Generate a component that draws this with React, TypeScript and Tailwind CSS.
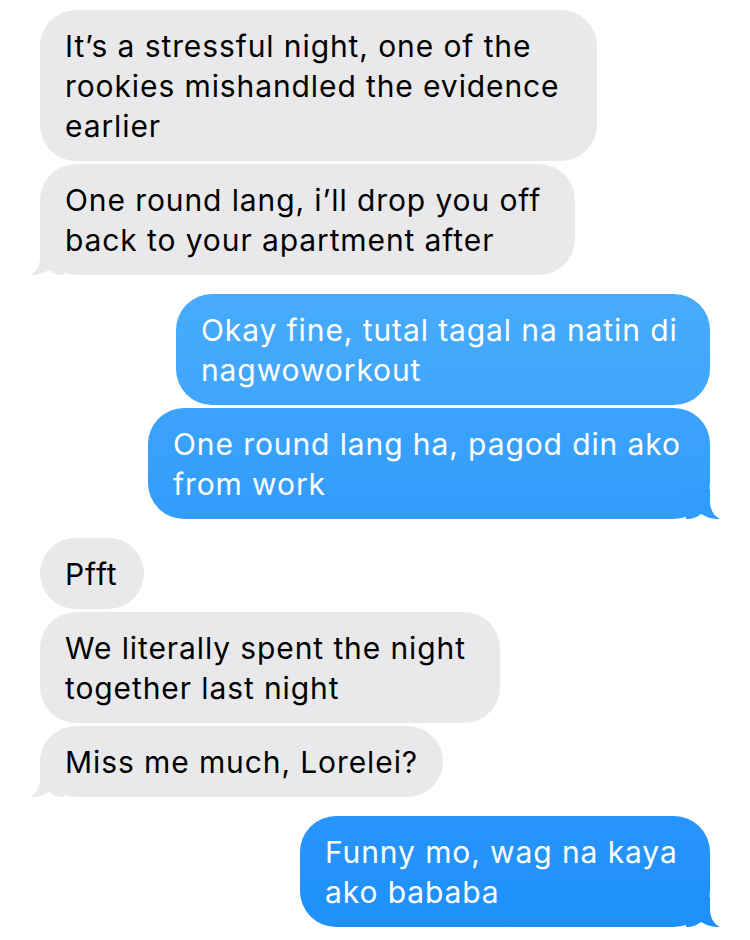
import React, {FC} from 'react';

type TBubbleProps = {
  lines: string[];
  mine?: boolean;
  tail?: boolean;
  width: string;
  bg: string;
  tailColor: string;
};

const Tail: FC<{mine?: boolean; color: string}> = ({mine, color}) => (
  <svg
    width="34"
    height="30"
    viewBox="0 0 34 30"
    className={mine ? 'absolute -right-[10px] bottom-0 -scale-x-100' : 'absolute -left-[10px] bottom-0'}
  >
    <path d="M10 0 L10 12 C10 21 6 27 0 30 C8 30 14 28 19 25 C23 28 27 30 34 30 L34 0 Z" fill={color} />
  </svg>
);

const Bubble: FC<TBubbleProps> = ({lines, mine, tail, width, bg, tailColor}) => (
  <div className={`relative ${width} ${bg} rounded-[36px] pl-[25px] pt-4 pb-[15px]`}>
    {tail && <Tail mine={mine} color={tailColor} />}
    <p className={`relative text-[30px] leading-[40px] tracking-[0.9px] ${mine ? 'text-white' : 'text-black'}`}>
      {lines.map((line, index) => (
        <span key={index} className="block whitespace-nowrap">
          {line}
        </span>
      ))}
    </p>
  </div>
);

const GRAY = 'bg-[#e9e9eb]';

const App: FC = () => {
  return (
    <div className="h-[940px] w-[750px] overflow-hidden bg-white px-10 pt-[10px] font-['Inter','Liberation_Sans',sans-serif]">
      <div className="flex flex-col items-start gap-[3px]">
        <Bubble
          width="w-[557px]"
          bg={GRAY}
          tailColor="#e9e9eb"
          lines={['It’s a stressful night, one of the', 'rookies mishandled the evidence', 'earlier']}
        />
        <Bubble
          width="w-[535px]"
          bg={GRAY}
          tailColor="#e9e9eb"
          tail
          lines={['One round lang, i’ll drop you off', 'back to your apartment after']}
        />
      </div>

      <div className="mt-[19px] flex flex-col items-end gap-[3px]">
        <Bubble
          width="w-[534px]"
          bg="bg-gradient-to-b from-[#48abfc] to-[#3fa6fc]"
          tailColor="#3fa6fc"
          mine
          lines={['Okay fine, tutal tagal na natin di', 'nagwoworkout']}
        />
        <Bubble
          width="w-[562px]"
          bg="bg-gradient-to-b from-[#3ca3fc] to-[#329cfc]"
          tailColor="#329cfc"
          mine
          tail
          lines={['One round lang ha, pagod din ako', 'from work']}
        />
      </div>

      <div className="mt-[19px] flex flex-col items-start gap-[3px]">
        <Bubble width="w-[104px]" bg={GRAY} tailColor="#e9e9eb" lines={['Pfft']} />
        <Bubble
          width="w-[460px]"
          bg={GRAY}
          tailColor="#e9e9eb"
          lines={['We literally spent the night', 'together last night']}
        />
        <Bubble width="w-[403px]" bg={GRAY} tailColor="#e9e9eb" tail lines={['Miss me much, Lorelei?']} />
      </div>

      <div className="mt-[19px] flex flex-col items-end">
        <Bubble
          width="w-[410px]"
          bg="bg-gradient-to-b from-[#2696fb] to-[#1f8ffa]"
          tailColor="#1f8ffa"
          mine
          tail
          lines={['Funny mo, wag na kaya', 'ako bababa']}
        />
      </div>
    </div>
  );
};

export default App;
